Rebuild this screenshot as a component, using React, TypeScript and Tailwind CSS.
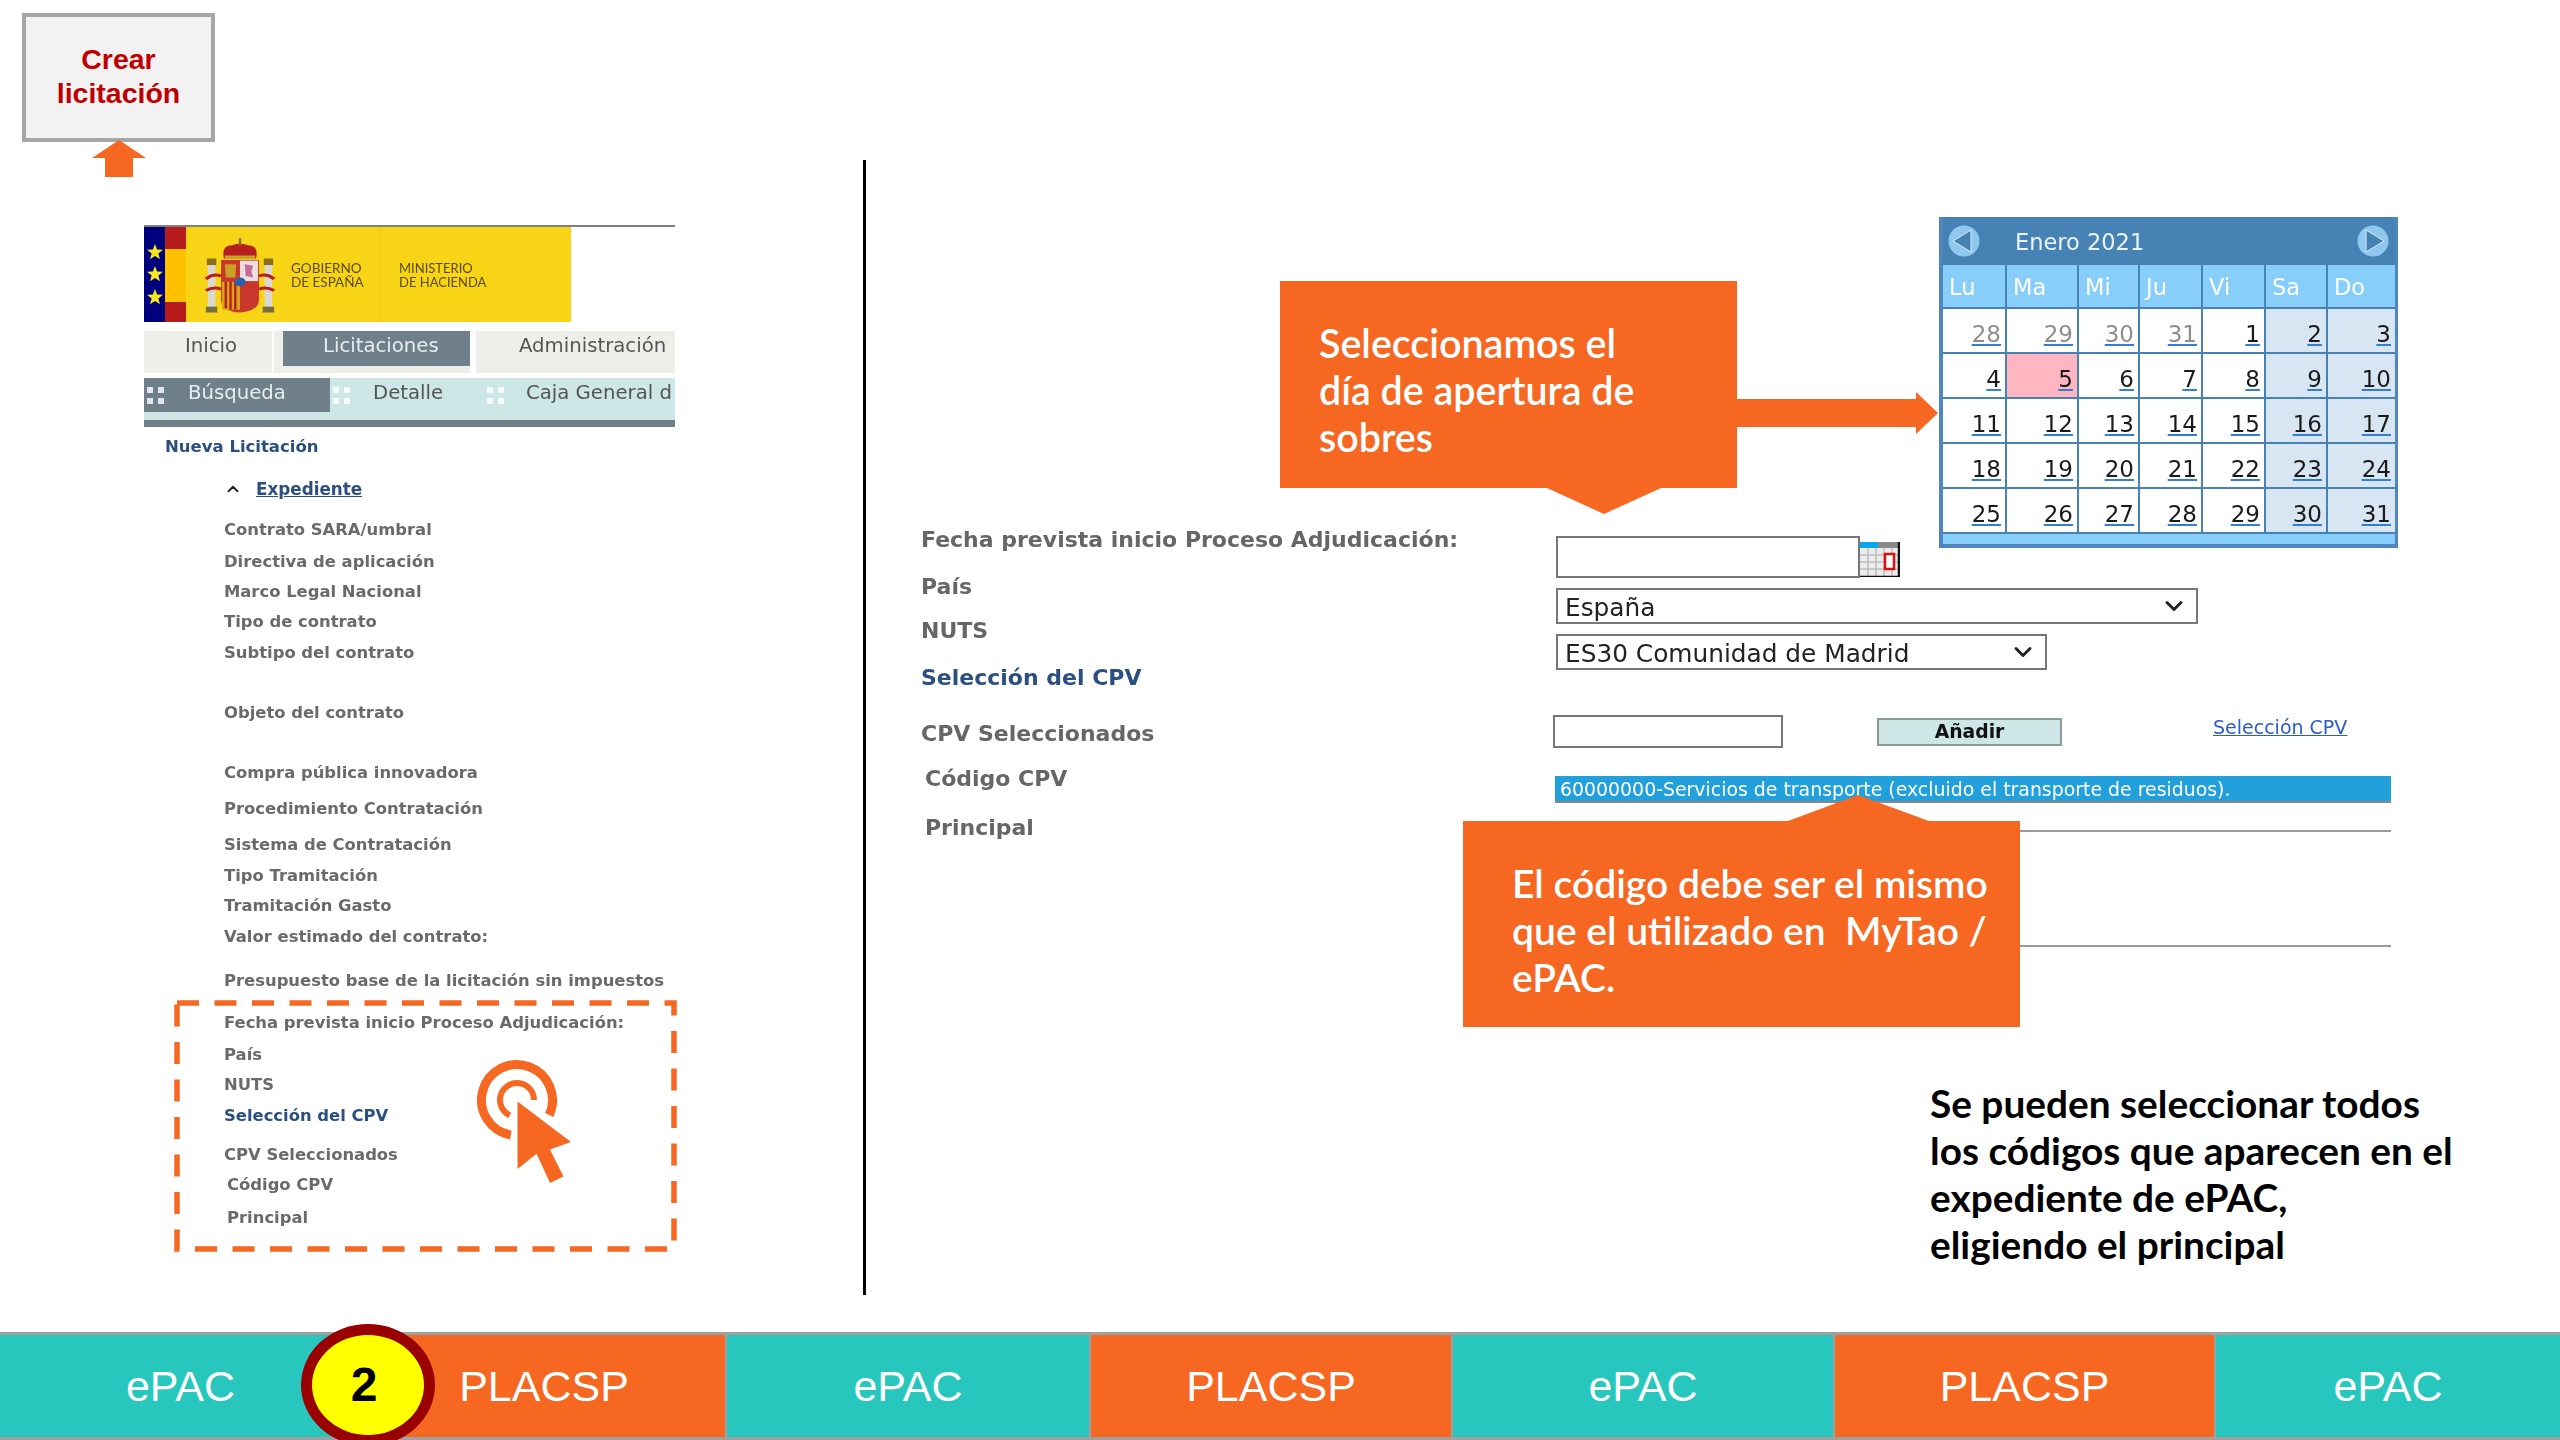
import { ChevronDown, ChevronUp } from "lucide-react";

const verdana = "font-['DejaVu_Sans',sans-serif]";
const lato = "font-['Lato',sans-serif]";
const arial = "font-['Liberation_Sans',Arial,sans-serif]";

const gray = "text-[#6a6a6a]";
const navy = "text-[#2b4f80]";

const expedienteRows = [
  { label: "Contrato SARA/umbral", cls: `mt-[21px] ${gray}` },
  { label: "Directiva de aplicación", cls: `mt-[12px] ${gray}` },
  { label: "Marco Legal Nacional", cls: `mt-[10px] ${gray}` },
  { label: "Tipo de contrato", cls: `mt-[10px] ${gray}` },
  { label: "Subtipo del contrato", cls: `mt-[11px] ${gray}` },
  { label: "Objeto del contrato", cls: `mt-[40px] ${gray}` },
  { label: "Compra pública innovadora", cls: `mt-[40px] ${gray}` },
  { label: "Procedimiento Contratación", cls: `mt-[16px] ${gray}` },
  { label: "Sistema de Contratación", cls: `mt-[16px] ${gray}` },
  { label: "Tipo Tramitación", cls: `mt-[11px] ${gray}` },
  { label: "Tramitación Gasto", cls: `mt-[10px] ${gray}` },
  { label: "Valor estimado del contrato:", cls: `mt-[11px] ${gray}` },
  { label: "Presupuesto base de la licitación sin impuestos", cls: `mt-[24px] ${gray}` },
  { label: "Fecha prevista inicio Proceso Adjudicación:", cls: `mt-[22px] ${gray}` },
  { label: "País", cls: `mt-[12px] ${gray}` },
  { label: "NUTS", cls: `mt-[10px] ${gray}` },
  { label: "Selección del CPV", cls: `mt-[11px] ${navy}` },
  { label: "CPV Seleccionados", cls: `mt-[19px] ${gray}` },
  { label: "Código CPV", cls: `mt-[10px] ml-[3px] ${gray}` },
  { label: "Principal", cls: `mt-[13px] ml-[3px] ${gray}` },
];

const calendarCols = ["Lu", "Ma", "Mi", "Ju", "Vi", "Sa", "Do"];
const calendarDays = [
  28, 29, 30, 31, 1, 2, 3, 4, 5, 6, 7, 8, 9, 10, 11, 12, 13, 14, 15, 16, 17, 18, 19, 20, 21, 22, 23, 24, 25, 26, 27, 28, 29,
  30, 31,
];

const segments = [
  { label: "ePAC", cls: "w-[361px] bg-[#28c7bd]" },
  { label: "PLACSP", cls: "w-[362px] bg-[#f66722]" },
  { label: "ePAC", cls: "w-[362px] bg-[#28c7bd]" },
  { label: "PLACSP", cls: "w-[360px] bg-[#f66722]" },
  { label: "ePAC", cls: "w-[380px] bg-[#28c7bd]" },
  { label: "PLACSP", cls: "w-[379px] bg-[#f66722]" },
  { label: "ePAC", cls: "flex-1 bg-[#28c7bd]" },
];

function Dots() {
  return (
    <div className="grid w-[17px] shrink-0 grid-cols-2 gap-[5px]">
      <span className="h-[6px] w-[6px] bg-white/80" />
      <span className="h-[6px] w-[6px] bg-white/80" />
      <span className="h-[6px] w-[6px] bg-white/80" />
      <span className="h-[6px] w-[6px] bg-white/80" />
    </div>
  );
}

function Star() {
  return (
    <svg viewBox="0 0 20 20" className="h-[16px] w-[16px]">
      <polygon points="10,0 12.6,7 20,7.2 14.2,11.8 16.2,19 10,15 3.8,19 5.8,11.8 0,7.2 7.4,7" fill="#f8e71c" />
    </svg>
  );
}

function Emblem() {
  return (
    <svg viewBox="0 0 76 104" preserveAspectRatio="none" className="h-[76px] w-[72px] shrink-0">
      <path d="M21 28 Q18 10 30 10 Q38 6 46 10 Q58 10 55 28 Z" fill="#b5201c" />
      <rect x="22" y="24" width="32" height="5" fill="#c9a227" />
      <path d="M38 0 L38 10" stroke="#8a6d1c" strokeWidth="2.5" />
      <rect x="4" y="36" width="8" height="60" fill="#d9d9d0" />
      <rect x="64" y="36" width="8" height="60" fill="#d9d9d0" />
      <rect x="3" y="28" width="10" height="9" fill="#8a6d1c" />
      <rect x="63" y="28" width="10" height="9" fill="#8a6d1c" />
      <rect x="2" y="94" width="12" height="8" fill="#77703a" />
      <rect x="62" y="94" width="12" height="8" fill="#77703a" />
      <path d="M18 30 H58 V84 Q58 100 38 102 Q18 100 18 84 Z" fill="#c8362c" />
      <rect x="38" y="31" width="19" height="28" fill="#e8dfe0" />
      <path d="M43 36 L52 38 L50 46 L52 54 L44 52 Z" fill="#c66a9a" />
      <rect x="19" y="60" width="19" height="38" fill="#d8a21e" />
      <path d="M23 60 V96 M28 60 V98 M33 60 V98" stroke="#b5201c" strokeWidth="2.5" />
      <path d="M38 60 H57 V84 Q57 98 38 101 Z" fill="#c8362c" />
      <circle cx="38" cy="60" r="6" fill="#2f5fa8" />
      <path d="M22 36 L34 36 L33 54 L23 54 Z" fill="#c9a227" />
      <path d="M2 56 Q10 48 18 52 M74 56 Q66 48 58 52 M2 72 Q10 66 18 70 M74 72 Q66 66 58 70" stroke="#b5201c" strokeWidth="4" fill="none" />
    </svg>
  );
}

function CalendarIcon() {
  return (
    <svg viewBox="0 0 40 35" className="h-[35px] w-[40px] shrink-0">
      <rect x="0" y="0" width="39" height="34" fill="#ececec" />
      <rect x="0" y="0" width="39" height="6" fill="#8a8a8a" />
      <rect x="0" y="0" width="18" height="6" fill="#0aa5ef" />
      <path d="M0 13 H39 M0 20 H39 M0 27 H39 M8 6 V34 M16 6 V34 M24 6 V34 M32 6 V34" stroke="#bdbdbd" strokeWidth="1.5" />
      <rect x="25" y="12" width="9" height="15" fill="#fff" stroke="#e01010" strokeWidth="2.5" />
      <path d="M39 0 V35 H0" stroke="#111" strokeWidth="2.5" fill="none" />
    </svg>
  );
}

function NavArrow(props: { dir: "left" | "right" }) {
  return (
    <svg viewBox="0 0 32 32" className="h-[32px] w-[32px]">
      <circle cx="16" cy="16" r="15.5" fill="#8fc8ee" />
      {props.dir === "left" ? (
        <polygon points="23,5 23,27 5,16" fill="#4682b4" stroke="#dcecf8" strokeWidth="1" />
      ) : (
        <polygon points="9,5 9,27 27,16" fill="#4682b4" stroke="#dcecf8" strokeWidth="1" />
      )}
    </svg>
  );
}

function TargetCursor() {
  return (
    <svg viewBox="0 0 110 135" className="absolute left-[471px] top-[1055px] h-[135px] w-[110px]">
      <path d="M78.2 60 A35.5 35.5 0 1 0 39.8 80" fill="none" stroke="#f66722" strokeWidth="9" />
      <path d="M63 45 A17 17 0 1 0 38.8 60.4" fill="none" stroke="#f66722" strokeWidth="6" />
      <polygon points="46.5,46.6 100,87 79,94.6 92.5,121.6 79,128 65.6,98.7 46.5,114" fill="#f66722" />
    </svg>
  );
}

function DashedFrame() {
  return (
    <svg viewBox="0 0 503 252" className="absolute left-[174px] top-[1000px] h-[252px] w-[503px]">
      <rect x="3" y="3" width="497" height="246" fill="none" stroke="#f66722" strokeWidth="5.5" strokeDasharray="22 15.5" />
    </svg>
  );
}

function Calendar() {
  return (
    <div className={`absolute left-[1939px] top-[217px] w-[459px] border-b-4 border-l-4 border-r-[3px] border-[#4f86bb] bg-[#4682b4] blur-[0.5px] ${verdana}`}>
      <div className="flex h-[48px] items-center justify-between text-white">
        <div className="flex items-center pl-[5px]">
          <NavArrow dir="left" />
          <span className="ml-[35px] mt-[4px] text-[22.5px] text-[#eaf4fb]">Enero 2021</span>
        </div>
        <div className="mr-[6px]">
          <NavArrow dir="right" />
        </div>
      </div>
      <div className="grid grid-cols-[62px_70px_59px_61px_61px_60px_67px] gap-[2px]">
        {calendarCols.map((c) => (
          <div key={c} className="flex h-[42px] items-center bg-[#87cefa] pl-[6px] pt-[4px] text-[22.5px] text-white">
            {c}
          </div>
        ))}
        {calendarDays.map((d, i) => {
          const col = i % 7;
          const weekend = col >= 5;
          const muted = i < 4;
          const today = i === 8;
          return (
            <div
              key={i}
              className={`flex h-[43px] items-center justify-end pr-[4px] pt-[8px] text-[23px] ${
                today ? "bg-[#ffb6c1]" : weekend ? "bg-[#d8e6f4]" : "bg-white"
              } ${muted ? "text-[#8e8e8e]" : "text-[#1a1a1a]"}`}
            >
              <span className="underline decoration-[#2f7fd6] decoration-2 underline-offset-2">{d}</span>
            </div>
          );
        })}
      </div>
      <div className="mt-[2px] h-[10px] bg-[#87cefa]" />
    </div>
  );
}

function GovPanel() {
  return (
    <div className={`absolute left-[144px] top-[225px] w-[531px] blur-[0.5px] ${verdana}`}>
      <div className="h-[2px] bg-[#808080]" />
      <div className="flex h-[95px] w-[427px] bg-[#f8d417]">
        <div className="flex w-[21px] flex-col items-center justify-around bg-[#00007f] py-[14px]">
          <Star />
          <Star />
          <Star />
        </div>
        <div className="flex w-[21px] flex-col">
          <div className="h-[22px] bg-[#b71c1c]" />
          <div className="flex-1 bg-[#ffc000]" />
          <div className="h-[20px] bg-[#b71c1c]" />
        </div>
        <div className="ml-[18px] flex items-center pt-[2px]">
          <Emblem />
        </div>
        <div className={`ml-[15px] flex w-[89px] flex-col justify-center border-r border-[#f0c80f] text-[13.5px] leading-[14px] text-[#5a4a10] ${lato}`}>
          <span>GOBIERNO</span>
          <span>DE ESPAÑA</span>
        </div>
        <div className={`ml-[19px] flex flex-col justify-center text-[13px] leading-[14px] text-[#5a4a10] ${lato}`}>
          <span>MINISTERIO</span>
          <span>DE HACIENDA</span>
        </div>
      </div>

      <div className="mt-[9px] flex h-[42px] bg-[#eeefe9] text-[19.7px] text-[#555]">
        <div className="w-[130px] border-r-2 border-white pl-[41px] leading-[30px]">Inicio</div>
        <div className="ml-[9px] h-[35px] w-[187px] bg-[#6f808a] pl-[40px] leading-[30px] text-[#e6ecef]">Licitaciones</div>
        <div className="w-[6px] bg-white" />
        <div className="pl-[43px] leading-[30px] whitespace-nowrap">Administración</div>
      </div>

      <div className="mt-[5px] flex h-[42px] bg-[#cde6e6] text-[19.7px] whitespace-nowrap text-[#555]">
        <div className="flex h-[34px] w-[186px] shrink-0 items-center bg-[#6f808a] pl-[3px] text-[#e6ecef]">
          <Dots />
          <span className="ml-[24px] -mt-[5px]">Búsqueda</span>
        </div>
        <div className="ml-[3px] flex h-[34px] w-[154px] shrink-0 items-center">
          <Dots />
          <span className="ml-[23px] -mt-[5px]">Detalle</span>
        </div>
        <div className="flex h-[34px] shrink-0 items-center">
          <Dots />
          <span className="ml-[22px] -mt-[5px]">Caja General d</span>
        </div>
      </div>
      <div className="h-[7px] bg-[#6f808a]" />

      <div className="ml-[21px] mt-[10px] text-[16.5px] font-bold leading-[20px] text-[#2b4f80]">Nueva Licitación</div>

      <div className="ml-[80px] mt-[22px]">
        <div className="flex items-center leading-[20px]">
          <ChevronUp className="h-[18px] w-[18px] text-[#222]" strokeWidth={2.5} />
          <span className="ml-[14px] text-[16.8px] font-bold text-[#2b4f80] underline">Expediente</span>
        </div>
        {expedienteRows.map((r) => (
          <div key={r.label} className={`whitespace-nowrap text-[16.4px] font-bold leading-[20px] ${r.cls}`}>
            {r.label}
          </div>
        ))}
      </div>
    </div>
  );
}

function CpvForm() {
  return (
    <div className={`absolute left-[921px] top-[526px] flex blur-[0.5px] ${verdana}`}>
      <div className="w-[632px] text-[22px] font-bold leading-[28px] whitespace-nowrap text-[#666]">
        <div>Fecha prevista inicio Proceso Adjudicación:</div>
        <div className="mt-[19px]">País</div>
        <div className="mt-[16px]">NUTS</div>
        <div className="mt-[19px] text-[#2b4f80]">Selección del CPV</div>
        <div className="mt-[28px]">CPV Seleccionados</div>
        <div className="ml-[4px] mt-[17px]">Código CPV</div>
        <div className="ml-[4px] mt-[21px]">Principal</div>
      </div>
      <div className="w-[838px] text-[24.8px] text-[#222]">
        <div className="ml-[3px] mt-[10px] flex items-start">
          <div className="h-[42px] w-[304px] border-2 border-[#777] bg-white" />
          <div className="mt-[6px]">
            <CalendarIcon />
          </div>
        </div>
        <div className="ml-[3px] mt-[10px] flex h-[36px] w-[642px] items-center justify-between border-2 border-[#777] bg-white pl-[7px] pr-[8px]">
          <span className="mt-[3px]">España</span>
          <ChevronDown className="h-[28px] w-[28px]" strokeWidth={2.5} />
        </div>
        <div className="ml-[3px] mt-[10px] flex h-[36px] w-[491px] items-center justify-between border-2 border-[#777] bg-white pl-[7px] pr-[8px] whitespace-nowrap">
          <span className="mt-[3px]">ES30 Comunidad de Madrid</span>
          <ChevronDown className="h-[28px] w-[28px]" strokeWidth={2.5} />
        </div>
        <div className="mt-[45px] flex items-start">
          <div className="h-[33px] w-[230px] border-2 border-[#777] bg-white" />
          <div className="ml-[94px] mt-[3px] flex h-[28px] w-[185px] items-center justify-center border-2 border-[#8a9a9a] bg-[#cde6e6] text-[18.8px] font-bold text-[#111]">
            Añadir
          </div>
          <span className="ml-[151px] -mt-[2px] text-[19px] text-[#2a5bd0] underline">Selección CPV</span>
        </div>
        <div className="ml-[2px] mt-[28px] flex h-[27px] w-[836px] items-center border-b-2 border-[#888] bg-[#22a0dc] pl-[5px] pt-[2px] text-[18.9px] whitespace-nowrap text-white">
          60000000-Servicios de transporte (excluido el transporte de residuos).
        </div>
      </div>
    </div>
  );
}

function Callouts() {
  return (
    <>
      {/* lines behind the second callout */}
      <div className="absolute left-[2020px] top-[830px] h-[2px] w-[371px] bg-[#9a9a9a]" />
      <div className="absolute left-[2020px] top-[945px] h-[2px] w-[371px] bg-[#9a9a9a]" />

      <div className={`absolute left-[1280px] top-[281px] h-[207px] w-[457px] bg-[#f66722] pl-[39px] pt-[38px] text-[39.4px] leading-[47px] font-semibold text-white ${lato}`}>
        Seleccionamos el
        <br />
        día de apertura de
        <br />
        sobres
      </div>
      <svg viewBox="0 0 114 26" className="absolute left-[1547px] top-[488px] h-[26px] w-[114px]">
        <polygon points="0,0 114,0 57,26" fill="#f66722" />
      </svg>
      <svg viewBox="0 0 201 42" className="absolute left-[1737px] top-[392px] h-[42px] w-[201px]">
        <polygon points="0,7 179,7 179,0 201,21 179,42 179,35 0,35" fill="#f66722" />
      </svg>

      <div className={`absolute left-[1463px] top-[821px] h-[206px] w-[557px] bg-[#f66722] pl-[49px] pt-[39px] text-[39px] leading-[47px] font-semibold whitespace-nowrap text-white ${lato}`}>
        El código debe ser el mismo
        <br />
        que el utilizado en&nbsp; MyTao /
        <br />
        ePAC.
      </div>
      <svg viewBox="0 0 141 26" className="absolute left-[1788px] top-[795px] h-[26px] w-[141px]">
        <polygon points="70,0 141,26 0,26" fill="#f66722" />
      </svg>

      <div className={`absolute left-[1930px] top-[1080px] text-[38.8px] leading-[47px] font-bold whitespace-nowrap text-black ${lato}`}>
        Se pueden seleccionar todos
        <br />
        los códigos que aparecen en el
        <br />
        expediente de ePAC,
        <br />
        eligiendo el principal
      </div>
    </>
  );
}

function BottomBar() {
  return (
    <div className="relative flex h-[108px] w-full gap-[2px] overflow-hidden border-y-[3px] border-[#a0a0a0] bg-[#a0a0a0]">
      {segments.map((s, i) => (
        <div key={i} className={`flex items-center justify-center text-[43px] text-white ${arial} ${s.cls}`}>
          {s.label}
        </div>
      ))}
    </div>
  );
}

export default function App() {
  return (
    <div className="relative h-[1440px] w-[2560px] overflow-hidden bg-white">
      <div className="h-[1332px]" />
      <BottomBar />

      <div className="absolute left-[22px] top-[13px] flex h-[129px] w-[193px] items-center justify-center border-4 border-[#a6a6a6] bg-[#f2f2f2] pb-[4px] text-center">
        <span className={`text-[28.5px] font-bold leading-[34px] text-[#c00000] ${arial}`}>
          Crear
          <br />
          licitación
        </span>
      </div>
      <svg viewBox="0 0 54 37" className="absolute left-[92px] top-[140px] h-[37px] w-[54px]">
        <polygon points="27,0 54,18 41,18 41,37 13,37 13,18 0,18" fill="#f66722" />
      </svg>

      <GovPanel />
      <DashedFrame />
      <TargetCursor />

      <div className="absolute left-[863px] top-[160px] h-[1135px] w-[3px] bg-black" />

      <CpvForm />
      <Calendar />
      <Callouts />

      <div className="absolute left-[301px] top-[1324px] flex h-[122px] w-[134px] items-center justify-center rounded-[50%] border-[11px] border-[#990000] bg-[#ffff00] pr-[8px]">
        <span className={`text-[48px] font-bold text-black ${arial}`}>2</span>
      </div>
    </div>
  );
}
